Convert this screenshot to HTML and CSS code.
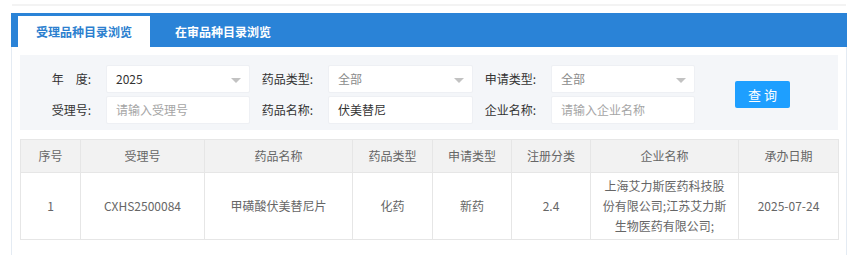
FILE: index.html
```html
<!DOCTYPE html>
<html lang="zh-CN">
<head>
    <meta charset="UTF-8">
    <title>受理品种目录浏览</title>
    <link rel="stylesheet" href="styles.css">
</head>
<body>
    <div class="topline"></div>
    <div class="panel">
        <div class="tabs">
            <div class="tab active">受理品种目录浏览</div>
            <div class="tab">在审品种目录浏览</div>
        </div>
        <div class="panel-body">
            <div class="search">
                <div class="fields">
                    <label class="lbl">年　度:</label>
                    <div class="field select"><span class="val">2025</span><i class="arrow"></i></div>
                    <label class="lbl">药品类型:</label>
                    <div class="field select"><span class="val muted">全部</span><i class="arrow"></i></div>
                    <label class="lbl">申请类型:</label>
                    <div class="field select"><span class="val muted">全部</span><i class="arrow"></i></div>

                    <label class="lbl">受理号:</label>
                    <div class="field"><span class="val placeholder">请输入受理号</span></div>
                    <label class="lbl">药品名称:</label>
                    <div class="field"><span class="val">伏美替尼</span></div>
                    <label class="lbl">企业名称:</label>
                    <div class="field"><span class="val placeholder">请输入企业名称</span></div>
                </div>
                <button class="btn">查 询</button>
            </div>

            <table class="grid">
                <colgroup>
                    <col style="width:60px">
                    <col style="width:124px">
                    <col style="width:148px">
                    <col style="width:80px">
                    <col style="width:79px">
                    <col style="width:79px">
                    <col style="width:148px">
                    <col style="width:100px">
                </colgroup>
                <thead>
                    <tr>
                        <th>序号</th>
                        <th>受理号</th>
                        <th>药品名称</th>
                        <th>药品类型</th>
                        <th>申请类型</th>
                        <th>注册分类</th>
                        <th>企业名称</th>
                        <th>承办日期</th>
                    </tr>
                </thead>
                <tbody>
                    <tr>
                        <td>1</td>
                        <td>CXHS2500084</td>
                        <td>甲磺酸伏美替尼片</td>
                        <td>化药</td>
                        <td>新药</td>
                        <td>2.4</td>
                        <td>上海艾力斯医药科技股份有限公司;江苏艾力斯生物医药有限公司;</td>
                        <td>2025-07-24</td>
                    </tr>
                </tbody>
            </table>
        </div>
    </div>
</body>
</html>
```

FILE: styles.css
```css
html, body {
    height: 100%;
    overflow: hidden;
}
body {
    margin: 0;
    background-color: #ffffff;
    font-family: "Microsoft YaHei", "Noto Sans CJK SC", sans-serif;
    font-size: 12px;
    color: #333333;
}
.topline {
    height: 2px;
    margin: 4px 0 0 12px;
    width: 834px;
    background-color: #f3f3f3;
}
.panel {
    margin: 7px 18px 0 11px;
    height: 242px;
}
.tabs {
    display: flex;
    gap: 7px;
    height: 34px;
    padding: 3px 0 0 7px;
    box-sizing: border-box;
    background-color: #2a83d7;
}
.tab {
    height: 31px;
    line-height: 31px;
    padding: 0 18px;
    color: #ffffff;
    font-weight: bold;
}
.tab.active {
    background-color: #ffffff;
    color: #2c7fcf;
}
.panel-body {
    height: 208px;
    border-left: 1px solid #e4ebf3;
    border-right: 1px solid #e4ebf3;
    padding: 8px 8px 0 8px;
    box-sizing: border-box;
}
.search {
    display: flex;
    align-items: center;
    background-color: #f4f6f9;
    padding: 10px 0 6px 0;
}
.fields {
    display: grid;
    grid-template-columns: 86px 144px 78px 145px 78px 144px;
    grid-auto-rows: 28px;
    row-gap: 3px;
}
.lbl {
    text-align: right;
    padding-right: 15px;
    line-height: 28px;
    color: #333333;
    white-space: nowrap;
}
.field {
    position: relative;
    background-color: #ffffff;
    border: 1px solid #eef0f4;
    border-radius: 2px;
    box-sizing: border-box;
    line-height: 26px;
    padding-left: 9px;
}
.val {
    color: #333333;
}
.val.muted {
    color: #8a8a8a;
}
.val.placeholder {
    color: #a5a5a5;
}
.arrow {
    position: absolute;
    right: 8px;
    top: 12px;
    width: 0;
    height: 0;
    border-left: 5px solid transparent;
    border-right: 5px solid transparent;
    border-top: 5px solid #c2c2c2;
}
.btn {
    margin-left: 40px;
    width: 55px;
    height: 27px;
    padding: 0;
    border: none;
    border-radius: 2px;
    background-color: #1e9fff;
    color: #ffffff;
    font-family: inherit;
    font-size: 13px;
    cursor: pointer;
}
.grid {
    margin-top: 9px;
    width: 818px;
    border-collapse: collapse;
    table-layout: fixed;
    color: #666666;
}
.grid th,
.grid td {
    border: 1px solid #e6e6e6;
    text-align: center;
    line-height: 20px;
    font-weight: normal;
}
.grid th {
    background-color: #f2f2f2;
    padding: 6px 0;
}
.grid td {
    background-color: #ffffff;
    padding: 3px 11px;
}
```
